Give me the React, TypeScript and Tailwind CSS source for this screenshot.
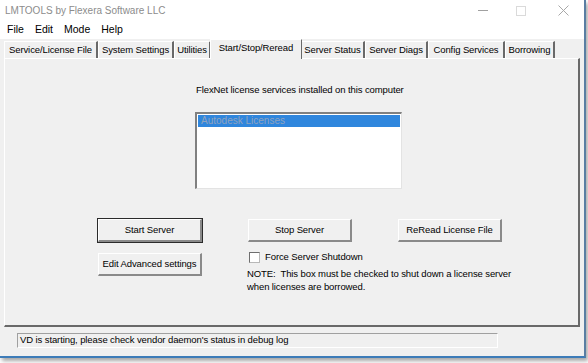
const tabs: [string, number][] = [
  ["Service/License File", 94],
  ["System Settings", 76],
  ["Utilities", 37],
  ["Start/Stop/Reread", 92],
  ["Server Status", 64],
  ["Server Diags", 63],
  ["Config Services", 77],
  ["Borrowing", 50],
];

function Btn({ label, def }: { label: string; def?: boolean }) {
  return (
    <div
      className={
        "w-[106px] h-[25px] flex bg-[#f0f0f0] border " +
        (def ? "border-[#2b2b2b]" : "border-transparent")
      }
    >
      <div className="w-full h-full flex items-center justify-center whitespace-nowrap border-t border-l border-t-white border-l-white border-r-2 border-b-2 border-r-[#8a8a8a] border-b-[#8a8a8a]">
        {label}
      </div>
    </div>
  );
}

export default function App() {
  return (
    <div
      className="w-[588px] h-[363px] bg-white overflow-hidden text-[9.5px] tracking-[-0.1px] text-black"
      style={{ fontFamily: '"Liberation Sans", Arial, sans-serif' }}
    >
      <div className="w-[586px] h-[358px] bg-[#f0f0f0] flex flex-col border-r-2 border-b-2 border-r-[#5a7ea3] border-b-[#3d7cb8] shadow-[2px_3px_4px_rgba(0,0,0,0.35)]">
        {/* title bar */}
        <div className="h-[21px] bg-white flex items-center pl-[5px] pr-[15px]">
          <span className="text-[10px] tracking-normal text-[#8c8c8c] flex-1">LMTOOLS by Flexera Software LLC</span>
          <span className="w-[10px] h-px bg-[#a0a0a0] mr-[28px]" />
          <span className="w-[10px] h-[10px] border border-[#dadada] mr-[32px]" />
          <svg width="11" height="11" viewBox="0 0 11 11">
            <path d="M0.5 0.5 L10.5 10.5 M10.5 0.5 L0.5 10.5" stroke="#a8a8a8" strokeWidth="1" />
          </svg>
        </div>
        {/* menu */}
        <div className="h-[18px] bg-white flex items-center gap-[11px] pl-[7px] text-[10.5px] tracking-normal">
          <span>File</span>
          <span>Edit</span>
          <span>Mode</span>
          <span>Help</span>
        </div>
        {/* tabs */}
        <div className="flex items-end h-[19px] pl-[4px]">
          {tabs.map(([t, w]) => {
            const sel = t === "Start/Stop/Reread";
            return (
              <div
                key={t}
                style={{ width: w }}
                className={
                  sel
                    ? "h-[20px] -mb-px z-10 pb-[3px] bg-[#f0f0f0] border-l border-t border-r border-l-white border-t-white border-r-[#696969] flex items-center justify-center whitespace-nowrap -ml-[1px] -mr-[1px]"
                    : "h-[17px] bg-[#f0f0f0] border-l border-t border-r-2 border-l-white border-t-white border-r-[#696969] flex items-center justify-center whitespace-nowrap"
                }
              >
                {t}
              </div>
            );
          })}
        </div>
        {/* panel */}
        <div className="ml-[4px] w-[576px] h-[269px] border-l border-t border-r-2 border-b-2 border-l-white border-t-white border-r-[#696969] border-b-[#696969] flex flex-col">
          <div className="pl-[191px] mt-[24px] h-[14px] leading-[14px] whitespace-nowrap">
            FlexNet license services installed on this computer
          </div>
          <div className="ml-[190px] mt-[15px] w-[207px] h-[77px] bg-white border-t-2 border-l-2 border-t-[#808080] border-l-[#808080] border-r border-b border-r-[#e3e3e3] border-b-[#e3e3e3] p-px">
            <div className="h-[12px] bg-[#2f86dd] text-[#8fa3bd] leading-[12px] pl-[3px] text-[10px] tracking-normal">Autodesk Licenses</div>
          </div>
          <div className="flex mt-[29px] pl-[92px] gap-[44px]">
            <div className="flex flex-col gap-[9px] w-[106px]">
              <Btn label="Start Server" def />
              <Btn label="Edit Advanced settings" />
            </div>
            <div className="flex flex-col w-[106px]">
              <Btn label="Stop Server" />
              <div className="flex items-center mt-[7px] ml-[2px] gap-[5px] whitespace-nowrap">
                <span className="shrink-0 w-[11px] h-[11px] bg-white border-t border-l border-t-[#6e6e6e] border-l-[#6e6e6e] border-r border-b border-r-[#b8b8b8] border-b-[#b8b8b8]" />
                <span>Force Server Shutdown</span>
              </div>
              <div className="mt-[3px] leading-[13px] whitespace-nowrap">
                NOTE:&nbsp; This box must be checked to shut down a license server
                <br />
                when licenses are borrowed.
              </div>
            </div>
            <div className="w-[106px]">
              <Btn label="ReRead License File" />
            </div>
          </div>
        </div>
        {/* status bar */}
        <div className="ml-[17px] mt-[6px] w-[481px] h-[15px] border-t border-l border-t-[#a0a0a0] border-l-[#a0a0a0] border-r border-b border-r-white border-b-white flex items-center pl-[2px] whitespace-nowrap">
          VD is starting, please check vendor daemon's status in debug log
        </div>
      </div>
    </div>
  );
}
